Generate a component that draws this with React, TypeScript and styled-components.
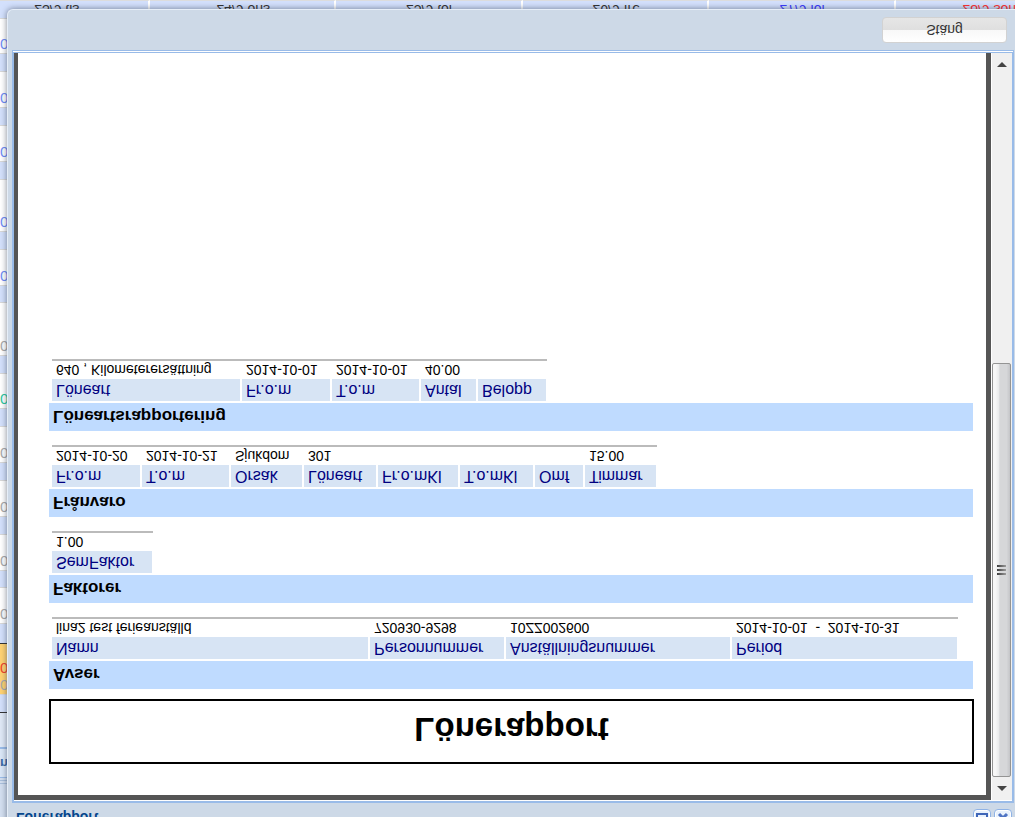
import React from "react";
import styled, { createGlobalStyle } from "styled-components";

const GlobalStyle = createGlobalStyle`
  *, *::before, *::after { box-sizing: border-box; }
  body {
    margin: 0;
    font-family: "Liberation Sans", Arial, sans-serif;
    color: #000;
  }
  button { font-family: inherit; }
`;

/* The whole screen is mirrored top to bottom. */
const Screen = styled.div`
  position: relative;
  height: 100vh;
  overflow: hidden;
  transform: scaleY(-1);
`;

/* ---------- schedule behind the window ---------- */

const Schedule = styled.div`
  display: flex;
  flex-direction: column;
  height: 100%;
  background: #d5e1f8;
`;

const Hours = styled.div`
  display: flex;
  flex: 1;
  flex-direction: column;
  min-height: 0;
  overflow: hidden;
  font-size: 15px;
  line-height: 17px;
`;

const StatusStrip = styled.div`
  flex: none;
  height: 40px;
  background: #d3dff0;
  border-bottom: 1px solid #99bbe8;
  display: flex;
  flex-direction: column;
  justify-content: flex-end;
`;

const StatusLine = styled.div`
  height: 3px;
  border-top: 1px solid #a9bfdc;
`;

const TabStrip = styled.div`
  flex: none;
  height: 30px;
  padding-top: 5px;
  border-bottom: 2px solid #99bbe8;
  background: #dbe7f7;
  color: #3b6aa5;
  font-size: 13px;
  font-weight: bold;
`;

const HourCell = styled.div<{ $h: number; $bg: string; $ink?: string; $line?: string }>`
  flex: none;
  height: ${(p) => p.$h}px;
  background: ${(p) => p.$bg};
  color: ${(p) => p.$ink ?? "#aaa"};
  border-bottom: 1px solid ${(p) => p.$line ?? "#d8d8d8"};
`;

const Days = styled.div`
  flex: none;
  display: grid;
  grid-template-columns: repeat(6, 1fr);
  margin: 0 -67px 0 -37px;
  background: #d3e0fc;
`;

const Day = styled.div<{ $ink: string }>`
  height: 18px;
  padding-left: 3px;
  line-height: 16px;
  font-size: 14px;
  text-align: center;
  color: ${(p) => p.$ink};
  border-right: 2px solid #fff;
  border-bottom: 1px solid #dcdcdc;
`;

/* ---------- window ---------- */

const Window = styled.section`
  position: absolute;
  top: -14px;
  right: 0;
  bottom: 9px;
  left: 7px;
  display: flex;
  flex-direction: column;
  background: #cdd9e7;
  border: solid #e6eef8;
  border-width: 0 0 1px 1px;
  border-radius: 0 0 0 6px;
  box-shadow: 0 0 6px 0 rgba(40, 50, 70, 0.6);
`;

const TitleBar = styled.header`
  flex: none;
  display: flex;
  align-items: center;
  gap: 3px;
  height: 28px;
  padding: 4px 3px 6px 8px;
`;

const WindowTitle = styled.h2`
  flex: 1;
  margin: 0;
  font-size: 14px;
  line-height: 18px;
  color: #04468c;
`;

const ToolButton = styled.button`
  width: 18px;
  height: 18px;
  padding: 0;
  border: 1px solid #8fb3e6;
  border-radius: 4px;
  background: #e9f2fd;
  box-shadow: inset 0 0 0 1px #fff;
  svg { display: block; }
`;

const Frame = styled.div`
  flex: 1;
  min-height: 0;
  display: flex;
  margin: 0 1px 0 4px;
  border: 2px solid #99bbe8;
  border-bottom: 3px double #99bbe8;
  background: #fff;
  padding-top: 1px;
`;

const Page = styled.main`
  flex: 1;
  min-width: 0;
  overflow: hidden;
  padding: 31px 13px 0 31px;
  background: #fff;
  border: solid #555;
  border-width: 5px 5px 0 4px;
`;

const ReportTitle = styled.h1`
  margin: 0 -1px 10px 0;
  padding: 14px 0 10px;
  border: 2px solid #000;
  font-size: 33px;
  line-height: 37px;
  text-align: center;
`;

const Section = styled.section`
  margin-bottom: 14px;
`;

const SectionTitle = styled.h3`
  margin: 0 0 2px;
  padding: 2px 4px 0;
  background: #bfdbff;
  font-size: 17px;
  line-height: 26px;
`;

const TableWrap = styled.div`
  padding: 0 15px 0 3px;
`;

const Table = styled.table<{ $width?: number }>`
  width: ${(p) => (p.$width ? `${p.$width}px` : "100%")};
  table-layout: fixed;
  border-collapse: separate;
  border-spacing: 0;
  border-bottom: 2px solid #bbb;
  white-space: pre;
`;

const Head = styled.th<{ $width?: number }>`
  width: ${(p) => (p.$width ? `${p.$width}px` : "auto")};
  height: 22px;
  padding: 0 4px;
  border-right: 2px solid #fff;
  background: #d7e4f4;
  color: #000080;
  font-size: 16px;
  font-weight: normal;
  line-height: 22px;
  text-align: left;

  &:last-child { border-right-width: 1px; }
`;

const Cell = styled.td`
  height: 18px;
  padding: 0 4px;
  font-size: 14px;
  line-height: 18px;
`;

/* ---------- scroll bar ---------- */

const ScrollBar = styled.div`
  flex: none;
  display: flex;
  flex-direction: column;
  width: 21px;
  padding-right: 1px;
  background: #f0f0f0;
  border-left: 1px solid #fff;
`;

const ScrollButton = styled.button`
  flex: none;
  display: flex;
  align-items: center;
  justify-content: center;
  height: 23px;
  padding: 0;
  border: 0;
  background: #f0f0f0;
`;

const Thumb = styled.div`
  flex: 414;
  display: flex;
  flex-direction: column;
  align-items: center;
  justify-content: center;
  gap: 2px;
  border: 1px solid #949494;
  border-radius: 2px;
  background: linear-gradient(to right, #f7f7f7 0 15%, #e9eaeb 35%, #d6d7d9 40%, #d6d7d9 80%, #c4c5c8);
`;

const Grip = styled.span`
  width: 9px;
  height: 2px;
  background: linear-gradient(to right, #3c3c3c, #9a9a9a);
`;

const Track = styled.div`
  flex: 288;
`;

/* ---------- window buttons ---------- */

const Footer = styled.footer`
  flex: none;
  display: flex;
  justify-content: flex-end;
  height: 40px;
  padding: 7px 8px;
`;

const CloseButton = styled.button`
  width: 125px;
  height: 26px;
  padding: 0;
  border: 1px solid #d2d2d2;
  border-radius: 4px;
  background: linear-gradient(#fff, #f8f8f8 50%, #dfdfdf 50%, #e6e6e6);
  color: #333;
  font-size: 14px;
`;

const WHITE = "#fff";
const BLUE = "#d3e0fb";
const INK_BLUE = "#6f8cf5";
const INK_GREEN = "#2cc9a0";

type Hour = { h: number; bg: string; ink?: string; text?: string; line?: string };

const hours: Hour[] = [
  { h: 35, bg: "#dfe8f6", line: "#333" },
  { h: 18, bg: BLUE },
  { h: 51, bg: "#ffd272", ink: "#f0452c", text: "0\n0", line: "#333" },
  { h: 20, bg: BLUE },
  { h: 36, bg: WHITE, text: "0" },
  { h: 17, bg: BLUE },
  { h: 36, bg: WHITE, text: "0" },
  { h: 18, bg: BLUE },
  { h: 36, bg: WHITE, text: "0" },
  { h: 18, bg: BLUE },
  { h: 36, bg: WHITE, text: "0" },
  { h: 18, bg: BLUE },
  { h: 35, bg: WHITE, ink: INK_GREEN, text: "0" },
  { h: 18, bg: BLUE },
  { h: 53, bg: WHITE, text: "0" },
  { h: 17, bg: BLUE },
  { h: 36, bg: WHITE, ink: INK_BLUE, text: "0" },
  { h: 18, bg: BLUE },
  { h: 52, bg: WHITE, ink: INK_BLUE, text: "0" },
  { h: 18, bg: BLUE },
  { h: 36, bg: WHITE, ink: INK_BLUE, text: "0" },
  { h: 18, bg: BLUE },
  { h: 36, bg: WHITE, ink: INK_BLUE, text: "0" },
  { h: 18, bg: BLUE },
  { h: 35, bg: WHITE, ink: INK_BLUE, text: "0" },
];

const days = [
  { name: "23/9 tis", ink: "#333" },
  { name: "24/9 ons", ink: "#333" },
  { name: "25/9 tor", ink: "#333" },
  { name: "26/9 fre", ink: "#333" },
  { name: "27/9 lör", ink: "#3a3aff" },
  { name: "28/9 sön", ink: "#ff3030" },
];

type Column = { head: string; value: string; width?: number };
type ReportSection = { title: string; width?: number; columns: Column[] };

const sections: ReportSection[] = [
  {
    title: "Avser",
    columns: [
      { head: "Namn", value: "lina2 test ferieanställd", width: 318 },
      { head: "Personnummer", value: "720930-9298", width: 136 },
      { head: "Anställningsnummer", value: "10ZZ002600", width: 226 },
      { head: "Period", value: "2014-10-01  -  2014-10-31" },
    ],
  },
  {
    title: "Faktorer",
    width: 101,
    columns: [{ head: "SemFaktor", value: "1.00" }],
  },
  {
    title: "Frånvaro",
    width: 605,
    columns: [
      { head: "Fr.o.m", value: "2014-10-20", width: 90 },
      { head: "T.o.m", value: "2014-10-21", width: 89 },
      { head: "Orsak", value: "Sjukdom", width: 73 },
      { head: "Löneart", value: "301", width: 74 },
      { head: "Fr.o.mKl", value: "", width: 82 },
      { head: "T.o.mKl", value: "", width: 75 },
      { head: "Omf", value: "", width: 50 },
      { head: "Timmar", value: "15.00" },
    ],
  },
  {
    title: "Löneartsrapportering",
    width: 495,
    columns: [
      { head: "Löneart", value: "640 , Kilometerersättning", width: 190 },
      { head: "Fr.o.m", value: "2014-10-01", width: 90 },
      { head: "T.o.m", value: "2014-10-01", width: 89 },
      { head: "Antal", value: "40.00", width: 57 },
      { head: "Belopp", value: "" },
    ],
  },
];

function ReportTable({ title, width, columns }: ReportSection) {
  return (
    <Section>
      <SectionTitle>{title}</SectionTitle>
      <TableWrap>
        <Table $width={width} aria-label={title}>
          <thead>
            <tr>
              {columns.map((c) => (
                <Head key={c.head} $width={c.width} scope="col">{c.head}</Head>
              ))}
            </tr>
          </thead>
          <tbody>
            <tr>
              {columns.map((c) => (
                <Cell key={c.head}>{c.value}</Cell>
              ))}
            </tr>
          </tbody>
        </Table>
      </TableWrap>
    </Section>
  );
}

const HourText = styled.div`
  white-space: pre;
  &::first-line { color: #aaa; }
`;

export default function App() {
  return (
    <Screen>
      <GlobalStyle />
      <Schedule>
        <Hours>
          <StatusStrip>
            <StatusLine />
            <StatusLine />
          </StatusStrip>
          <TabStrip>n</TabStrip>
          {hours.map((r, i) => (
            <HourCell key={i} $h={r.h} $bg={r.bg} $ink={r.ink} $line={r.line}>
              {r.text && r.text.length > 1 ? <HourText>{r.text}</HourText> : r.text}
            </HourCell>
          ))}
        </Hours>
        <Days>
          {days.map((d) => (
            <Day key={d.name} $ink={d.ink}>{d.name}</Day>
          ))}
        </Days>
      </Schedule>

      <Window>
        <TitleBar>
          <WindowTitle>Lönerapport</WindowTitle>
          <ToolButton aria-label="Maximera">
            <svg width="16" height="16" viewBox="0 0 16 16" fill="none" stroke="#3f66b8" strokeWidth="2">
              <path d="M3 4H13V12H3Z" />
            </svg>
          </ToolButton>
          <ToolButton aria-label="Stäng fönster">
            <svg width="16" height="16" viewBox="0 0 16 16" fill="none" stroke="#4f74c4" strokeWidth="3">
              <path d="M4 4L12 12M12 4L4 12" />
            </svg>
          </ToolButton>
        </TitleBar>
        <Frame>
          <Page>
            <ReportTitle>Lönerapport</ReportTitle>
            {sections.map((s) => (
              <ReportTable key={s.title} {...s} />
            ))}
          </Page>
          <ScrollBar>
            <ScrollButton aria-label="Rulla uppåt">
              <svg width="10" height="5" viewBox="0 0 10 5"><path d="M5 0L10 5H0Z" fill="#444" /></svg>
            </ScrollButton>
            <Thumb>
              <Grip />
              <Grip />
              <Grip />
            </Thumb>
            <Track />
            <ScrollButton aria-label="Rulla nedåt">
              <svg width="10" height="5" viewBox="0 0 10 5"><path d="M0 0H10L5 5Z" fill="#444" /></svg>
            </ScrollButton>
          </ScrollBar>
        </Frame>
        <Footer>
          <CloseButton>Stäng</CloseButton>
        </Footer>
      </Window>
    </Screen>
  );
}
